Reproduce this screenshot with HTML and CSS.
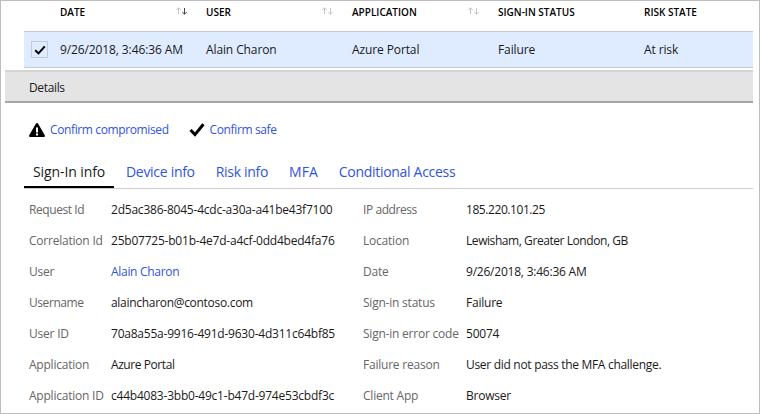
FILE: index.html
```html
<!DOCTYPE html>
<html lang="en">
<head>
<meta charset="utf-8">
<title>Sign-ins</title>
<link rel="stylesheet" href="styles.css">
</head>
<body>
<main class="panel">
  <section class="signins">
    <div class="row head">
      <span></span>
      <div class="cell"><span>DATE</span><svg class="sort" viewBox="0 0 12 8"><path class="off" d="M2.5 7V.8M.3 3 2.5.8 4.7 3"/><path class="on" d="M8.5 1v6.2M6.3 5l2.2 2.2L10.7 5"/></svg></div>
      <div class="cell"><span>USER</span><svg class="sort" viewBox="0 0 12 8"><path class="off" d="M2.5 7V.8M.3 3 2.5.8 4.7 3M8.5 1v6.2M6.3 5l2.2 2.2L10.7 5"/></svg></div>
      <div class="cell"><span>APPLICATION</span><svg class="sort" viewBox="0 0 12 8"><path class="off" d="M2.5 7V.8M.3 3 2.5.8 4.7 3M8.5 1v6.2M6.3 5l2.2 2.2L10.7 5"/></svg></div>
      <div class="cell"><span>SIGN-IN STATUS</span></div>
      <div class="cell"><span>RISK STATE</span></div>
    </div>
    <div class="row selected">
      <span class="check"><svg viewBox="0 0 12 10"><path d="M1.2 5.2 4.5 8.4 10.8 1.3"/></svg></span>
      <span>9/26/2018, 3:46:36 AM</span>
      <span>Alain Charon</span>
      <span>Azure Portal</span>
      <span>Failure</span>
      <span>At risk</span>
    </div>
  </section>
  <h2 class="details-bar">Details</h2>
  <div class="actions">
    <a class="action"><svg viewBox="0 0 16 14"><path d="M8 0Q8.8 0 9.3 1L15.8 12.3Q16.2 14 15 14H1Q-.2 14 .2 12.3L6.7 1Q7.2 0 8 0Z"/><path class="mark" d="M7 4.5h2V9.5H7zM7 10.5h2v2H7z"/></svg><span>Confirm compromised</span></a>
    <a class="action"><svg class="tick" viewBox="0 0 16 14"><path d="M1.5 7 6 11.6 14.4 1.3"/></svg><span>Confirm safe</span></a>
  </div>
  <nav class="tabs">
    <a class="tab active">Sign-In info</a>
    <a class="tab">Device info</a>
    <a class="tab">Risk info</a>
    <a class="tab wide">MFA</a>
    <a class="tab">Conditional Access</a>
  </nav>
  <div class="info">
    <dl>
      <dt class="tight">Request Id</dt><dd>2d5ac386-8045-4cdc-a30a-a41be43f7100</dd>
      <dt>Correlation Id</dt><dd>25b07725-b01b-4e7d-a4cf-0dd4bed4fa76</dd>
      <dt>User</dt><dd class="link snug">Alain Charon</dd>
      <dt class="tight">Username</dt><dd class="snug">alaincharon@contoso.com</dd>
      <dt>User ID</dt><dd>70a8a55a-9916-491d-9630-4d311c64bf85</dd>
      <dt>Application</dt><dd class="tight">Azure Portal</dd>
      <dt>Application ID</dt><dd>c44b4083-3bb0-49c1-b47d-974e53cbdf3c</dd>
    </dl>
    <dl class="right">
      <dt class="tight">IP address</dt><dd class="tight">185.220.101.25</dd>
      <dt>Location</dt><dd class="tight">Lewisham, Greater London, GB</dd>
      <dt>Date</dt><dd>9/26/2018, 3:46:36 AM</dd>
      <dt>Sign-in status</dt><dd>Failure</dd>
      <dt>Sign-in error code</dt><dd>50074</dd>
      <dt>Failure reason</dt><dd class="snug">User did not pass the MFA challenge.</dd>
      <dt>Client App</dt><dd>Browser</dd>
    </dl>
  </div>
</main>
</body>
</html>
```
FILE: styles.css
```css
* { box-sizing: border-box; }
body { margin: 0; font: 12px/16px "Open Sans", "Noto Sans", sans-serif; color: #1a1a1a; background: #fff; }
.panel { width: 760px; height: 414px; border: 1px solid #bdbdbd; overflow: hidden; white-space: nowrap; }
.signins { margin: 0 6px 0 23px; }
.row { display: grid; grid-template-columns: 36px 146px 146px 146px 146px 109px; align-items: center; }
.head { height: 30px; padding-bottom: 9px; font-size: 10px; font-weight: 600; color: #000; }
.cell { display: flex; justify-content: space-between; padding-right: 18px; align-items: center; }
.sort { width: 12px; height: 8px; margin-bottom: 2px; fill: none; }
.sort .off { stroke: #c4c4c4; }
.sort .on { stroke: #444; }
.selected { height: 37px; background: #dfecff; border-top: 1px solid #c6cad0; border-bottom: 1px solid #c6cad0; letter-spacing: -.11px; }
.check { width: 17px; height: 17px; margin-left: 7px; border: 1px solid #c5cad3; display: flex; align-items: center; justify-content: center; }
.check svg { width: 12px; height: 10px; fill: none; stroke: #000; stroke-width: 2; }
.details-bar { margin: 2px 6px 0 4px; height: 33px; padding-left: 24px; background: #e4e4e4; border-top: 2px solid #d5d5d5; border-bottom: 2px solid #a5a5a5; font-size: 12px; font-weight: 400; line-height: 32px; letter-spacing: -.35px; }
.actions { display: flex; gap: 20px; margin: 18px 0 0 28px; height: 18px; align-items: center; letter-spacing: -.38px; }
.action { display: flex; align-items: center; gap: 5px; color: #3054dc; }
.action svg { width: 16px; height: 14px; }
.action .mark { fill: #fff; }
.tick { fill: none; stroke: #000; stroke-width: 3; }
.tabs { display: flex; gap: 3px; margin: 19px 6px 0 23px; height: 31px; border-bottom: 1px solid #ccc; font-size: 14px; line-height: 28px; letter-spacing: -.3px; }
.tab { padding: 0 9px; color: #3054dc; }
.tab.wide { letter-spacing: 0; }
.tab.active { width: 90px; height: 30px; border-bottom: 2px solid #000; color: #1a1a1a; letter-spacing: -.1px; }
.info { display: flex; padding: 5px 0 0 28px; letter-spacing: -.22px; }
dl { margin: 0; width: 334px; display: grid; grid-template-columns: 82px 1fr; grid-auto-rows: 31px; line-height: 31px; }
dl.right { width: 390px; grid-template-columns: 103px 1fr; }
dt { color: #666; }
dd { margin: 0; }
.snug { letter-spacing: -.3px; }
.tight { letter-spacing: -.43px; }
.link { color: #3054dc; }
```
